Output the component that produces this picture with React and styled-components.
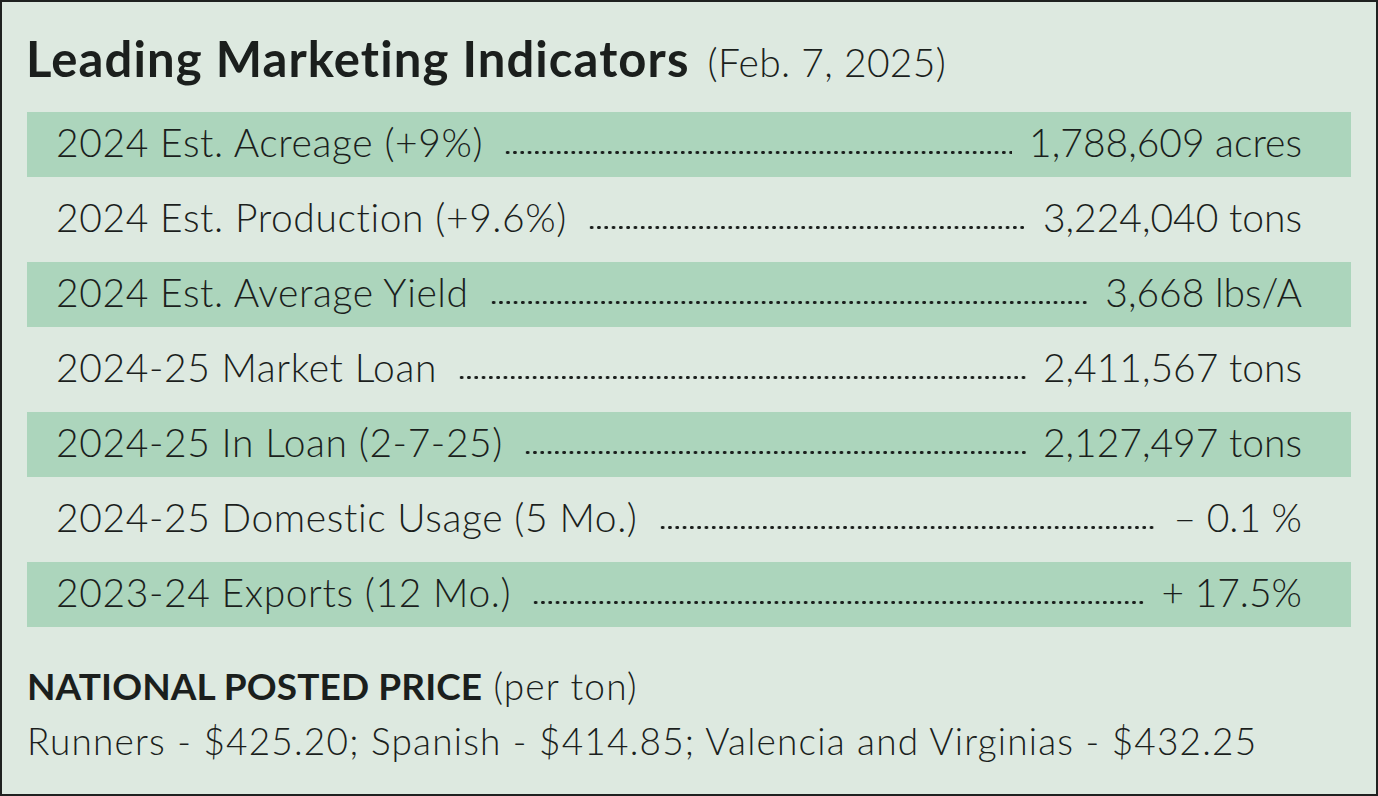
import React from 'react';
import styled, { createGlobalStyle } from 'styled-components';

const GlobalStyle = createGlobalStyle`
  html, body {
    margin: 0;
    padding: 0;
    background: #dde9e0;
  }
  * {
    box-sizing: border-box;
  }
`;

const Panel = styled.div`
  width: 1378px;
  height: 796px;
  border: 2px solid #1f2120;
  background: #dde9e0;
  color: #1b1f1d;
  font-family: 'Lato', 'Noto Sans', sans-serif;
  display: flex;
  flex-direction: column;
  padding: 32px 25px 0 25px;
`;

const Title = styled.h1`
  margin: 0 0 0 -1px;
  font-size: 49px;
  line-height: 49px;
  font-weight: 700;
  letter-spacing: 1.1px;
  height: 78px;
`;

const Dated = styled.span`
  font-size: 39px;
  font-weight: 300;
  letter-spacing: 0.3px;
  margin-left: 18px;
`;

const Rows = styled.div`
  display: flex;
  flex-direction: column;
  gap: 10px;
`;

const Row = styled.div`
  height: 65px;
  padding: 0 49px 5px 29px;
  display: flex;
  align-items: baseline;
  font-size: 39px;
  font-weight: 300;
  line-height: 60px;
  white-space: nowrap;
  background: ${(props) => (props.shaded ? '#acd5bc' : 'transparent')};
`;

const Label = styled.span`
  letter-spacing: 0.6px;
`;

const Leader = styled.span`
  flex: 1;
  min-width: 0;
  height: 5px;
  margin: 0 17px 0 21px;
  transform: translateY(-2px);
  background-image: radial-gradient(circle, #1b1f1d 1.5px, transparent 2px);
  background-size: 7.3px 5px;
  background-repeat: repeat-x;
`;

const Footer = styled.div`
  margin: 31px 0 0 0;
  font-size: 37px;
  font-weight: 300;
  line-height: 55px;
  letter-spacing: 1.2px;
`;

const Strong = styled.span`
  font-weight: 700;
  letter-spacing: 0.1px;
`;

const indicators = [
  { label: '2024 Est. Acreage (+9%)', value: '1,788,609 acres' },
  { label: '2024 Est. Production (+9.6%)', value: '3,224,040 tons' },
  { label: '2024 Est. Average Yield', value: '3,668 lbs/A' },
  { label: '2024-25 Market Loan', value: '2,411,567 tons' },
  { label: '2024-25 In Loan (2-7-25)', value: '2,127,497 tons' },
  { label: '2024-25 Domestic Usage (5 Mo.)', value: '\u2013 0.1 %' },
  { label: '2023-24 Exports (12 Mo.)', value: '+ 17.5%' },
];

export default function App() {
  return (
    <>
      <GlobalStyle />
      <Panel>
        <Title>
          Leading Marketing Indicators
          <Dated>(Feb. 7, 2025)</Dated>
        </Title>
        <Rows>
          {indicators.map((item, i) => (
            <Row key={item.label} shaded={i % 2 === 0}>
              <Label>{item.label}</Label>
              <Leader />
              <span>{item.value}</span>
            </Row>
          ))}
        </Rows>
        <Footer>
          <div>
            <Strong>NATIONAL POSTED PRICE</Strong> (per ton)
          </div>
          <div>Runners - $425.20; Spanish - $414.85; Valencia and Virginias - $432.25</div>
        </Footer>
      </Panel>
    </>
  );
}
